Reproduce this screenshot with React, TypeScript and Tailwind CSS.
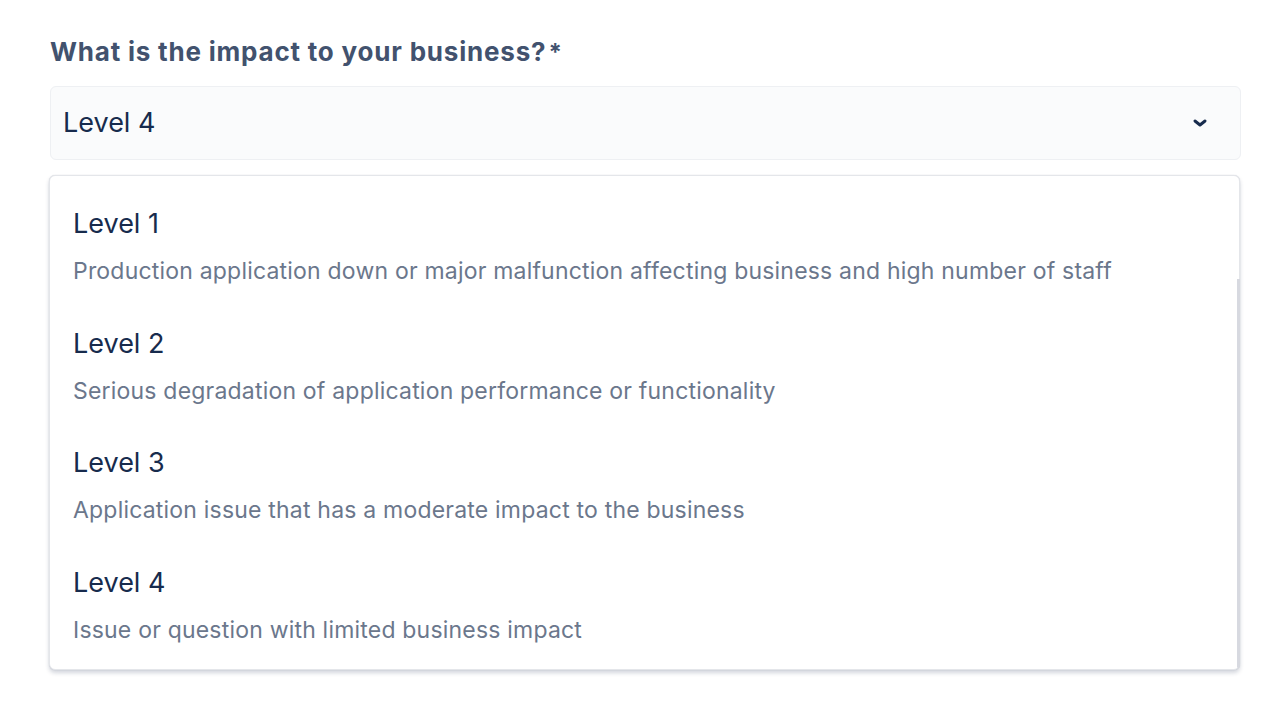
import React from "react";

const items = [
  { t: "Level 1", d: "Production application down or major malfunction affecting business and high number of staff" },
  { t: "Level 2", d: "Serious degradation of application performance or functionality" },
  { t: "Level 3", d: "Application issue that has a moderate impact to the business" },
  { t: "Level 4", d: "Issue or question with limited business impact" },
];

export default function App() {
  return (
    <div
      className="w-[1280px] h-[709px] bg-white overflow-hidden"
      style={{ fontFamily: "Inter, 'Noto Sans', 'Liberation Sans', sans-serif" }}
    >
      <div className="pt-[34px] pl-[50px] pr-[39px]">
        <div className="text-[26px] leading-[36px] font-bold text-[#42526e] tracking-[0.8px]">
          What is the impact to your business?<span className="ml-[2px] text-[24px]">*</span>
        </div>
        <div className="mt-[15px] h-[74px] rounded-[6px] border border-[#eef0f3] bg-[#fafbfc] flex items-center justify-between pl-[12px] pr-[32px]">
          <span className="text-[27px] text-[#172b4d]">Level 4</span>
          <svg width="16" height="10" viewBox="0 0 16 10">
            <path d="M3 3 L8 7 L13 3" stroke="#172b4d" strokeWidth="3" fill="none" strokeLinecap="round" strokeLinejoin="round" />
          </svg>
        </div>
      </div>
      <div className="ml-[49px] mr-[40px] mt-[15px] relative">
        <div className="rounded-[6px] border border-[#e4e6ea] bg-white pt-[12px] pb-[3px] shadow-[0_3px_4px_rgba(9,30,66,0.18),0_0_1px_rgba(9,30,66,0.2)]">
          {items.map((it) => (
            <div key={it.t} className="pt-[20px] pb-[20.6px] pl-[23px]">
              <div className="text-[27px] leading-[32px] text-[#172b4d]">{it.t}</div>
              <div className="mt-[15px] text-[23px] leading-[32px] text-[#6b778c] tracking-[0.2px]">{it.d}</div>
            </div>
          ))}
        </div>
        <div className="absolute right-0 top-[104px] bottom-[2px] w-[3px] bg-[#d7d9e0] rounded-b" />
      </div>
    </div>
  );
}
